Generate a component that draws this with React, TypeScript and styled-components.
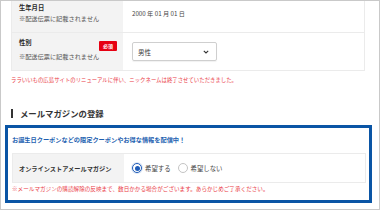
import React from "react";
import styled, { createGlobalStyle } from "styled-components";

const Global = createGlobalStyle`
  html, body { margin: 0; padding: 0; background: #fff; }
  body { font-family: "Noto Sans CJK JP", "Noto Sans", sans-serif; color: #333; }
`;

const Frame = styled.div`
  width: 380px;
  height: 210px;
  box-sizing: border-box;
  border: 1px solid #c9c9c9;
  overflow: hidden;
  background: #fff;
`;

const Section = styled.div`
  padding: 0 14px 0 10px;
`;

const Table = styled.div`
  border: 1px solid #ebebeb;
  border-top: none;
`;

const Row = styled.div<{ $h: number; $last?: boolean }>`
  display: grid;
  grid-template-columns: 111px 1fr;
  height: ${(p) => p.$h}px;
  border-bottom: ${(p) => (p.$last ? "none" : "1px solid #ebebeb")};
`;

const LabelCell = styled.div<{ $pt: number }>`
  background: #f3f3f3;
  padding: ${(p) => p.$pt}px 6px 0 7px;
  box-sizing: border-box;
  font-size: 6.2px;
  line-height: 11px;
`;

const TitleLine = styled.div`
  display: flex;
  justify-content: space-between;
  align-items: flex-start;
`;

const Title = styled.div`
  font-size: 6.3px;
  line-height: 11px;
  font-weight: 700;
  color: #2b2b2b;
`;

const Badge = styled.span`
  margin-top: 4px;
  width: 18px;
  height: 10px;
  background: #e60012;
  color: #fff;
  font-size: 5px;
  font-weight: 700;
  line-height: 10px;
  text-align: center;
  border-radius: 1px;
`;

const Sub = styled.div`
  font-size: 6.2px;
  line-height: 11px;
  color: #555;
`;

const ValueCell = styled.div<{ $center?: boolean; $pt?: number }>`
  display: flex;
  align-items: ${(p) => (p.$center ? "center" : "flex-start")};
  padding: ${(p) => p.$pt ?? 0}px 0 0 9px;
  box-sizing: border-box;
`;

const ValueText = styled.span`
  font-size: 6.2px;
  line-height: 11px;
  color: #444;
`;

const Select = styled.div`
  width: 85px;
  height: 19px;
  box-sizing: border-box;
  border: 1px solid #cfcfcf;
  border-radius: 2px;
  box-shadow: 0 1px 1px rgba(0, 0, 0, 0.06);
  display: flex;
  align-items: center;
  justify-content: space-between;
  padding: 0 7px 0 5px;
  font-size: 6.5px;
  color: #333;
`;

const Note = styled.div<{ $size: number; $mt: number }>`
  margin-top: ${(p) => p.$mt}px;
  font-size: ${(p) => p.$size}px;
  line-height: 10px;
  color: #ea3c47;
  white-space: nowrap;
`;

const Heading = styled.h2`
  margin: 22px 0 0 0;
  display: flex;
  align-items: center;
  gap: 7px;
  font-size: 8.4px;
  line-height: 12px;
  font-weight: 700;
  color: #333;
  &::before {
    content: "";
    width: 2px;
    height: 9px;
    background: #333;
  }
`;

const MagBox = styled.div`
  margin: 6px 7px 0 4px;
  border: 3px solid #0a55a5;
  padding: 7px 3px 6px 4px;
`;

const Promo = styled.div`
  font-size: 6.2px;
  line-height: 10px;
  font-weight: 700;
  color: #1d5fb0;
  white-space: nowrap;
`;

const MagRow = styled.div`
  margin-top: 8px;
  display: grid;
  grid-template-columns: 111px 1fr;
  height: 28px;
  border: 1px solid #ebebeb;
`;

const MagLabel = styled.div`
  background: #f3f3f3;
  display: flex;
  align-items: center;
  padding-left: 6px;
  font-size: 6.2px;
  font-weight: 700;
  color: #333;
  white-space: nowrap;
`;

const RadioGroup = styled.div`
  display: flex;
  align-items: center;
  gap: 7px;
  padding-left: 8px;
`;

const RadioItem = styled.label`
  display: flex;
  align-items: center;
  gap: 3px;
  font-size: 6.4px;
  color: #444;
`;

const RadioMark = styled.span<{ $on?: boolean }>`
  width: 10px;
  height: 10px;
  box-sizing: border-box;
  border-radius: 50%;
  background: #fff;
  border: ${(p) => (p.$on ? "1.5px solid #1f5cb8" : "1px solid #c4c4c4")};
  box-shadow: ${(p) => (p.$on ? "0 0 0 1px rgba(31,92,184,0.15)" : "none")};
  display: flex;
  align-items: center;
  justify-content: center;
  &::after {
    content: "";
    width: 5px;
    height: 5px;
    border-radius: 50%;
    background: ${(p) => (p.$on ? "#1f5cb8" : "transparent")};
  }
`;

const Chevron = () => (
  <svg width="6" height="4" viewBox="0 0 6 4">
    <polyline points="0.8,0.8 3,3 5.2,0.8" fill="none" stroke="#333" strokeWidth="1.1" />
  </svg>
);

export default function App() {
  return (
    <>
      <Global />
      <Frame>
        <Section>
          <Table>
            <Row $h={31}>
              <LabelCell $pt={1}>
                <Title>生年月日</Title>
                <Sub>※配送伝票に記載されません</Sub>
              </LabelCell>
              <ValueCell $pt={7}>
                <ValueText>2000 年 01 月 01 日</ValueText>
              </ValueCell>
            </Row>
            <Row $h={37} $last>
              <LabelCell $pt={4}>
                <TitleLine>
                  <Title>性別</Title>
                  <Badge>必須</Badge>
                </TitleLine>
                <Sub>※配送伝票に記載されません</Sub>
              </LabelCell>
              <ValueCell $center>
                <Select>
                  <span>男性</span>
                  <Chevron />
                </Select>
              </ValueCell>
            </Row>
          </Table>
          <Note $size={5.4} $mt={4}>
            ララいいもの広島サイトのリニューアルに伴い、ニックネームは終了させていただきました。
          </Note>
          <Heading>メールマガジンの登録</Heading>
        </Section>
        <MagBox>
          <Promo>お誕生日クーポンなどの限定クーポンやお得な情報を配信中！</Promo>
          <MagRow>
            <MagLabel>オンラインストアメールマガジン</MagLabel>
            <RadioGroup>
              <RadioItem>
                <RadioMark $on />
                希望する
              </RadioItem>
              <RadioItem>
                <RadioMark />
                希望しない
              </RadioItem>
            </RadioGroup>
          </MagRow>
          <Note $size={5.6} $mt={1}>
            ※メールマガジンの購読解除の反映まで、数日かかる場合がございます。あらかじめご了承ください。
          </Note>
        </MagBox>
      </Frame>
    </>
  );
}
